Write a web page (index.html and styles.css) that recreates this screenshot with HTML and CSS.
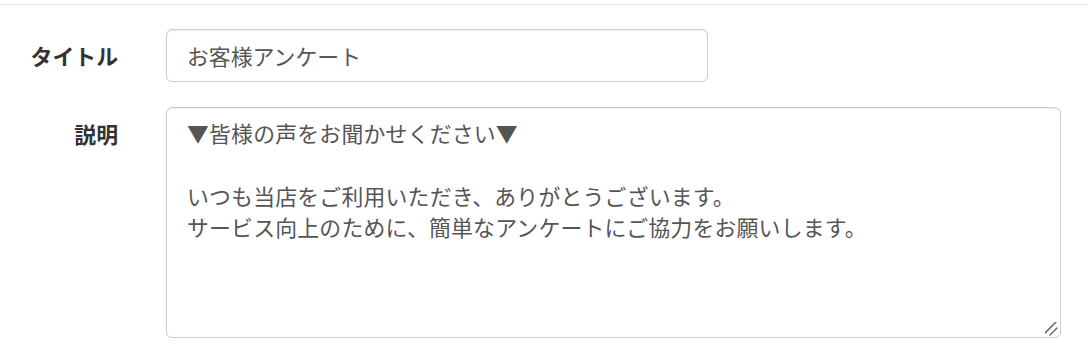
FILE: index.html
```html
<!DOCTYPE html>
<html lang="ja">
<head>
<meta charset="utf-8">
<link rel="stylesheet" href="styles.css">
</head>
<body>
<div class="page">
  <form class="form">
    <div class="row">
      <label class="label" for="title">タイトル</label>
      <div class="field">
        <input id="title" class="input" type="text" value="お客様アンケート">
      </div>
    </div>
    <div class="row">
      <label class="label" for="desc">説明</label>
      <div class="field">
        <textarea id="desc" class="textarea">▼皆様の声をお聞かせください▼

いつも当店をご利用いただき、ありがとうございます。
サービス向上のために、簡単なアンケートにご協力をお願いします。</textarea>
      </div>
    </div>
  </form>
</div>
</body>
</html>
```

FILE: styles.css
```css
html, body {
  margin: 0;
  padding: 0;
  background: #fff;
}

body {
  font-family: "Noto Sans CJK JP", "Noto Sans", sans-serif;
  font-size: 21.875px;
  color: #333;
}

.page {
  padding-top: 4px;
}

.form {
  border-top: 1px solid #e2e2e2;
  padding-top: 24px;
  display: flex;
  flex-direction: column;
  gap: 25px;
}

.row {
  display: grid;
  grid-template-columns: 166px 1fr;
  align-items: start;
}

.label {
  text-align: right;
  padding-right: 48px;
  padding-top: 11px;
  line-height: 31.25px;
  font-weight: bold;
  color: #333;
}

.input,
.textarea {
  box-sizing: border-box;
  display: block;
  margin: 0;
  font-family: inherit;
  font-size: 21.875px;
  line-height: 31.25px;
  color: #555;
  background: #fff;
  border: 1px solid #ccc;
  border-radius: 6px;
  box-shadow: inset 0 1px 1px rgba(0, 0, 0, 0.075);
  outline: none;
}

.input {
  width: 542px;
  height: 53px;
  padding: 0 20px;
}

.textarea {
  width: 895px;
  height: 231px;
  padding: 9px 20px;
  resize: vertical;
  overflow: auto;
  letter-spacing: 0.2px;
}

.textarea::-webkit-scrollbar {
  width: 18px;
  height: 18px;
}

.textarea::-webkit-resizer {
  background: url("data:image/svg+xml,%3Csvg xmlns='http://www.w3.org/2000/svg' width='18' height='18'%3E%3Cpath d='M2 15 L14 3 M8 16 L15 9' stroke='%23707070' stroke-width='1.6' stroke-linecap='round'/%3E%3C/svg%3E") no-repeat right bottom;
}
```
